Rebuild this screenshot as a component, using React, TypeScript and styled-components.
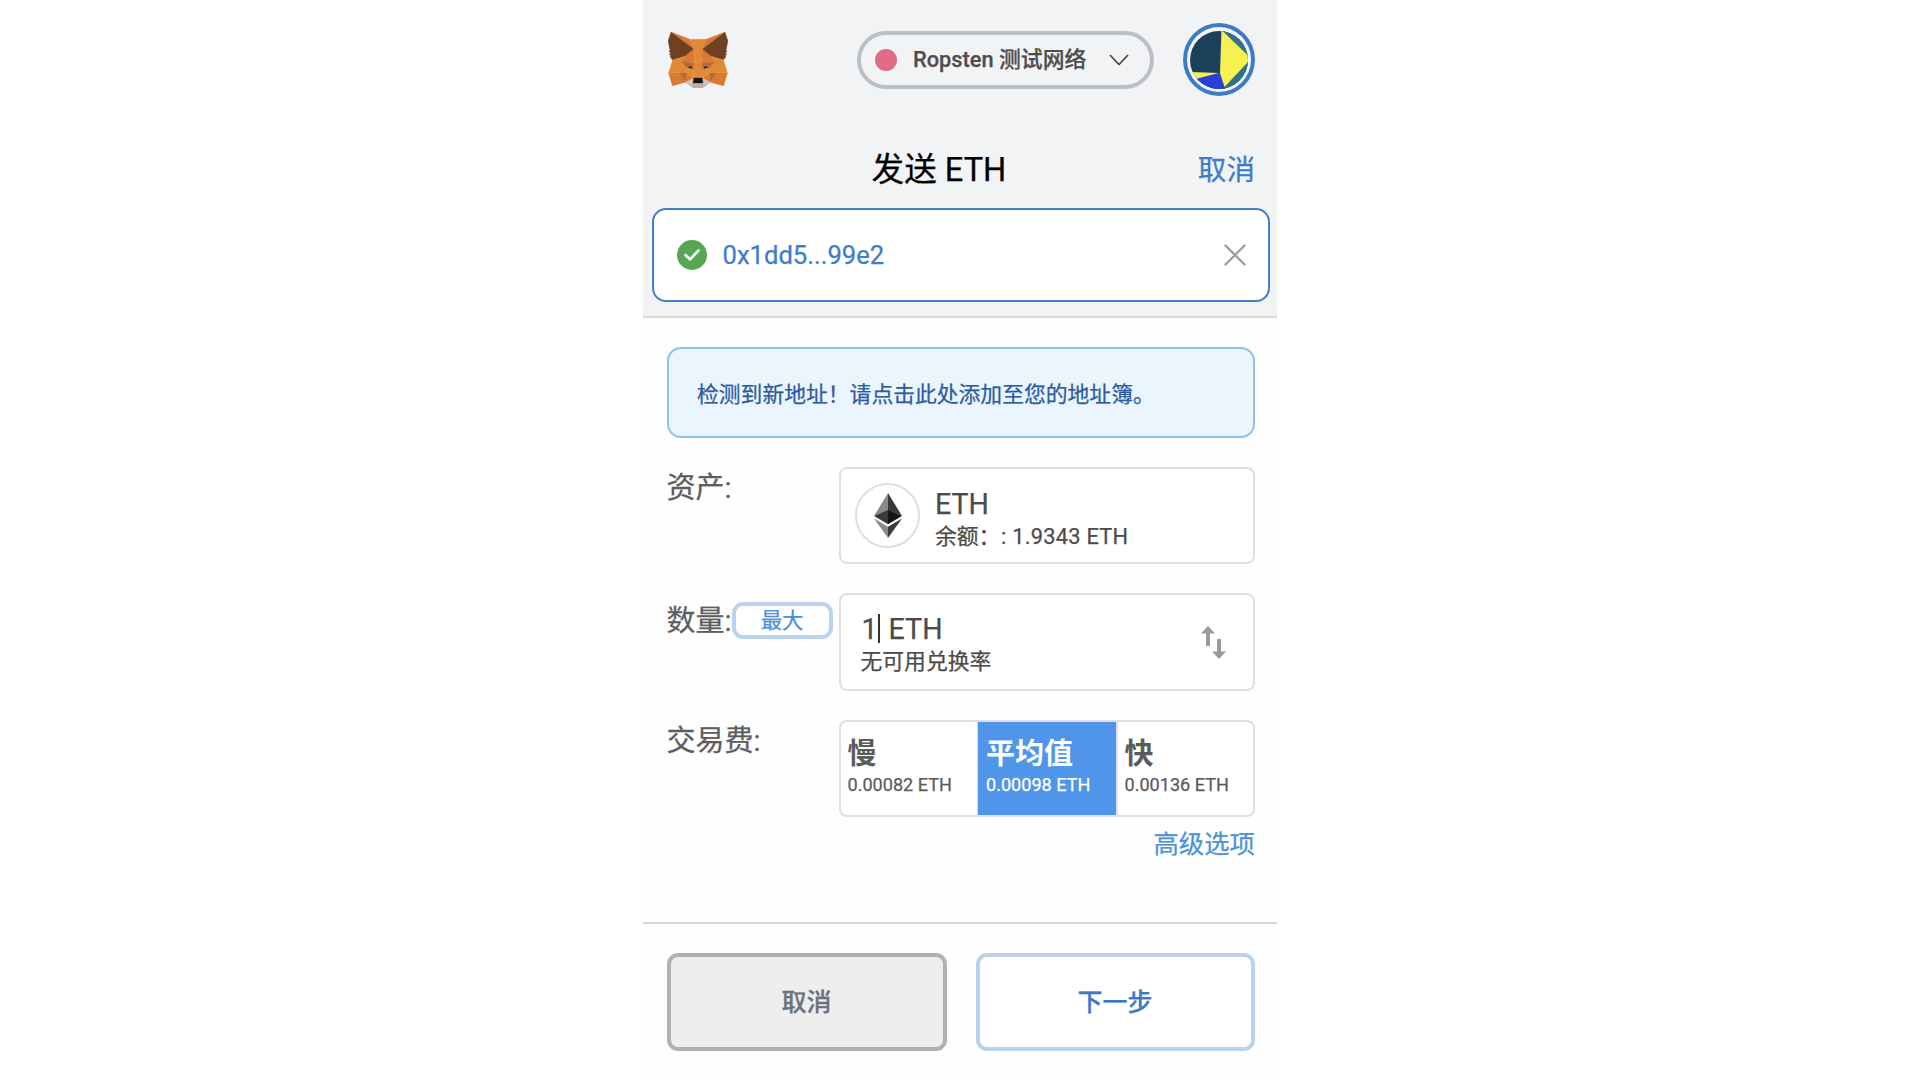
import React from 'react';
import styled, { createGlobalStyle } from 'styled-components';

const GlobalStyle = createGlobalStyle`
  * { box-sizing: border-box; }
  body {
    margin: 0;
    background: #fff;
    font-family: Roboto, "Noto Sans CJK SC", sans-serif;
    color: #4d4d4d;
    -webkit-text-stroke: 0.25px currentColor;
  }
  button { font-family: inherit; margin: 0; padding: 0; cursor: pointer; }
`;

const Popup = styled.main`
  width: 634px;
  height: 1080px;
  margin: 0 auto;
  display: flex;
  flex-direction: column;
  background: #fefefe;
`;

const Header = styled.header`
  height: 318px;
  flex: none;
  background: #f1f3f5;
  border-bottom: 2px solid #d9dadc;
  padding: 23px 7px 0 9px;
`;

const TopBar = styled.div`
  display: flex;
  align-items: center;
  height: 73px;
  padding: 0 15px 0 16px;
`;

const Fox = styled.svg`
  width: 60px;
  height: 56px;
  flex: none;
`;

const Network = styled.button`
  width: 297px;
  height: 58px;
  margin-left: auto;
  padding: 0 21px 0 14px;
  display: flex;
  align-items: center;
  border: 4px solid #bbbfc6;
  border-radius: 29px;
  background: #f2f3f5;
  color: #4d4d4f;
  font-size: 21.8px;
  font-weight: 500;
  line-height: 30px;
`;

const NetworkDot = styled.span`
  width: 22px;
  height: 22px;
  border-radius: 50%;
  background: #df6b85;
  margin-right: 16px;
`;

const Chevron = styled.svg`
  width: 20px;
  height: 12px;
  margin-left: auto;
`;

const Account = styled.button`
  width: 72px;
  height: 73px;
  margin-left: 29px;
  display: flex;
  align-items: center;
  justify-content: center;
  border: 4px solid #3d7bc9;
  border-radius: 50%;
  background: #f4f7fb;
`;

const TitleBar = styled.div`
  display: grid;
  grid-template-columns: 71px 1fr 100px;
  align-items: center;
  height: 112px;
  padding: 35px 15px 0 0;
`;

const Title = styled.h1`
  grid-column: 2;
  margin: 0;
  font-size: 32.6px;
  font-weight: 400;
  line-height: 40px;
  text-align: center;
  color: #000;
`;

const CancelLink = styled.a`
  font-size: 28.6px;
  line-height: 40px;
  text-align: right;
  color: #3c7bca;
`;

const Recipient = styled.div`
  display: flex;
  align-items: center;
  height: 94px;
  padding: 0 22px 0 23px;
  border: 2px solid #4380cb;
  border-radius: 14px;
  background: #fff;
`;

const Address = styled.span`
  flex: 1;
  margin-left: 15.5px;
  font-size: 25.6px;
  line-height: 32px;
  color: #3e7ccc;
`;

const Content = styled.section`
  flex: none;
  height: 606px;
  padding: 29px 22px 0 24px;
  border-bottom: 2px solid #d6d8da;
`;

const Notice = styled.div`
  height: 91px;
  display: flex;
  align-items: center;
  padding: 4px 28px 0;
  border: 2px solid #90c1ee;
  border-radius: 14px;
  background: #eaf5fe;
  color: #2d5c9e;
  font-size: 21.8px;
  line-height: 30px;
`;

const Row = styled.div`
  display: flex;
  height: 97.4px;
  margin-top: 29px;
`;

const LabelCell = styled.div`
  width: 172px;
  flex: none;
  display: flex;
  align-items: flex-start;
  color: #5d5d5d;
`;

const Label = styled.label<{ $top: number }>`
  font-size: 29px;
  line-height: 36px;
  margin-top: ${(p) => p.$top}px;
  margin-left: -0.5px;
  white-space: nowrap;
`;

const MaxButton = styled.button`
  width: 101px;
  height: 37px;
  margin: 9px 0 0;
  padding-top: 1px;
  border: 4px solid #bad4ef;
  border-radius: 11px;
  background: #fff;
  color: #4a91df;
  font-size: 21.4px;
  line-height: 28px;
`;

const Field = styled.div<{ $pad: string }>`
  flex: 1;
  display: flex;
  align-items: center;
  padding: ${(p) => p.$pad};
  border: 2px solid #dfdfdf;
  border-radius: 8px;
  background: #fff;
`;

const TokenBadge = styled.div`
  width: 65px;
  height: 65px;
  margin-right: 15px;
  display: flex;
  align-items: center;
  justify-content: center;
  border: 2px solid #dfdfdf;
  border-radius: 50%;
`;

const FieldText = styled.div<{ $drop: number }>`
  flex: 1;
  display: flex;
  flex-direction: column;
  padding-top: ${(p) => p.$drop}px;
`;

const Primary = styled.div`
  display: flex;
  align-items: center;
  font-size: 28.6px;
  line-height: 34px;
  color: #4b4b4b;
`;

const Secondary = styled.div`
  font-size: 21.8px;
  line-height: 32px;
  color: #4b4b4b;
  white-space: pre;
`;

const Balance = styled.span`
  margin-left: -5px;
  letter-spacing: 0.25px;
`;

const Caret = styled.span`
  width: 2px;
  height: 29px;
  background: #333;
  margin: 0 9px 0 0;
`;

const Digits = styled.span`
  margin-left: 1px;
`;

const FeeGroup = styled.div`
  flex: 1;
  display: grid;
  grid-template-columns: 136px 141px 1fr;
  border: 2px solid #dfdfdf;
  border-radius: 8px;
  background: #fff;
  overflow: hidden;
`;

const FeeOption = styled.button<{ $active?: boolean }>`
  display: flex;
  flex-direction: column;
  align-items: flex-start;
  padding: 14px 0 0 ${(p) => (p.$active ? 8 : 6.5)}px;
  border: 0;
  border-right: ${(p) => (p.$active ? '2px solid #dfe3e8' : '0')};
  border-left: ${(p) => (p.$active ? '1px solid #d5dce6' : '0')};
  background: ${(p) => (p.$active ? '#5095e9' : 'transparent')};
  color: ${(p) => (p.$active ? '#fff' : '#5b5b5b')};
`;

const FeeName = styled.span`
  font-size: 29px;
  font-weight: 700;
  line-height: 36px;
  -webkit-text-stroke: 0;
`;

const FeeValue = styled.span`
  font-size: 18.1px;
  line-height: 25px;
`;

const Advanced = styled.a`
  display: block;
  margin-top: 9px;
  text-align: right;
  font-size: 25.4px;
  line-height: 36px;
  color: #4b93d8;
`;

const Footer = styled.footer`
  display: grid;
  grid-template-columns: 280px 279px;
  justify-content: space-between;
  padding: 29px 22px 0 24px;
`;

const ActionButton = styled.button<{ $primary?: boolean }>`
  height: 98px;
  padding: 2px 1px 0 0;
  border: 4px solid ${(p) => (p.$primary ? '#b9d3ec' : '#b1b1b1')};
  border-radius: 11px;
  background: ${(p) => (p.$primary ? '#fff' : '#eeeeee')};
  color: ${(p) => (p.$primary ? '#3c78c6' : '#6b737d')};
  font-size: 25px;
  font-weight: 500;
  line-height: 36px;
`;

const foxFacets: [string, string][] = [
  ['#d87a35', '274.1 35.5 174.6 109.4 193 65.8'],
  ['#d87a35', '44.4 35.5 143.1 110.1 125.6 65.8'],
  ['#d87a35', '238.3 206.8 211.8 247.4 268.5 263 284.8 207.7'],
  ['#d87a35', '33.9 207.7 50.1 263 106.8 247.4 80.3 206.8'],
  ['#d87a35', '103.6 138.2 87.8 162.1 144.1 164.6 142.1 104.1'],
  ['#d87a35', '214.9 138.2 175.9 103.4 174.6 164.6 230.8 162.1'],
  ['#d87a35', '106.8 247.4 140.6 230.9 111.4 208.1'],
  ['#d87a35', '177.9 230.9 211.8 247.4 207.1 208.1'],
  ['#d3c2b6', '211.8 247.4 177.9 230.9 180.6 253 180.3 262.3'],
  ['#d3c2b6', '106.8 247.4 138.3 262.3 138.1 253 140.6 230.9'],
  ['#283445', '138.8 193.5 110.6 185.2 130.5 176.1'],
  ['#283445', '179.7 193.5 188 176.1 208 185.2'],
  ['#c0652c', '106.8 247.4 111.6 206.8 80.3 207.7'],
  ['#c0652c', '207 206.8 211.8 247.4 238.3 207.7'],
  ['#c0652c', '230.8 162.1 174.6 164.6 179.8 193.5 188.1 176.1 208.1 185.2'],
  ['#c0652c', '110.6 185.2 130.6 176.1 138.8 193.5 144.1 164.6 87.8 162.1'],
  ['#d87a35', '87.8 162.1 111.4 208.1 110.6 185.2'],
  ['#d87a35', '208.1 185.2 207.1 208.1 230.8 162.1'],
  ['#d87a35', '144.1 164.6 138.8 193.5 145.4 227.6 146.9 182.7'],
  ['#d87a35', '174.6 164.6 171.9 182.6 173.1 227.6 179.8 193.5'],
  ['#e38936', '179.8 193.5 173.1 227.6 177.9 230.9 207.1 208.1 208.1 185.2'],
  ['#e38936', '110.6 185.2 111.4 208.1 140.6 230.9 145.4 227.6 138.8 193.5'],
  ['#beaea1', '180.3 262.3 180.6 253 178.1 250.8 140.4 250.8 138.1 253 138.3 262.3 106.8 247.4 117.8 256.4 140.1 271.9 178.4 271.9 200.8 256.4 211.8 247.4'],
  ['#161616', '177.9 230.9 173.1 227.6 145.4 227.6 140.6 230.9 138.1 253 140.4 250.8 178.1 250.8 180.6 253'],
  ['#6f4021', '278.3 114.2 286.8 73.4 274.1 35.5 177.9 106.9 214.9 138.2 267.2 153.5 278.8 140 273.8 136.4 281.8 129.1 275.6 124.3 283.6 118.2'],
  ['#6f4021', '31.8 73.4 40.3 114.2 34.9 118.2 42.9 124.3 36.8 129.1 44.8 136.4 39.8 140 51.3 153.5 103.6 138.2 140.6 106.9 44.4 35.5'],
  ['#e38936', '267.2 153.5 214.9 138.2 230.8 162.1 207.1 208.1 238.3 207.7 284.8 207.7'],
  ['#e38936', '103.6 138.2 51.3 153.5 33.9 207.7 80.3 207.7 111.4 208.1 87.8 162.1'],
  ['#e38936', '174.6 164.6 177.9 106.9 193.1 65.8 125.6 65.8 140.6 106.9 144.1 164.6 145.3 182.8 145.4 227.6 173.1 227.6 173.3 182.8'],
];

const FoxLogo = () => (
  <Fox viewBox="31.8 35.5 255 236.4" preserveAspectRatio="none">
    {foxFacets.map(([fill, points], i) => (
      <polygon key={i} points={points} fill={fill} stroke={fill} strokeWidth="1" strokeLinejoin="round" />
    ))}
  </Fox>
);

const Identicon = () => (
  <svg width="58" height="58" viewBox="0 0 58 58">
    <defs>
      <clipPath id="disc"><circle cx="29" cy="29" r="29" /></clipPath>
    </defs>
    <g clipPath="url(#disc)">
      <rect width="58" height="58" fill="#1d405a" />
      <path d="M31 0H58V58H34Z" fill="#347083" />
      <path d="M0 41L30 42L0 50Z" fill="#f4f151" />
      <path d="M0 49.500L30.500 41.500L36 58H0Z" fill="#2a3fd6" />
      <path d="M31.500 -1L58 24.500V31L34.500 56L30 42Z" fill="#f4f151" />
    </g>
  </svg>
);

const EthLogo = () => (
  <svg width="28" height="45" viewBox="0 0 28 45">
    <path d="M14 0L0 23L14 17Z" fill="#8a8a8a" />
    <path d="M14 0L28 23L14 17Z" fill="#3a3a3a" />
    <path d="M14 16.700L0 23L14 31.200Z" fill="#393939" />
    <path d="M14 16.700L28 23L14 31.200Z" fill="#151515" />
    <path d="M0 25.500L14 33.800V45Z" fill="#8a8a8a" />
    <path d="M28 25.500L14 33.800V45Z" fill="#3c3c3b" />
  </svg>
);

const fees = [
  { name: '慢', value: '0.00082 ETH' },
  { name: '平均值', value: '0.00098 ETH', active: true },
  { name: '快', value: '0.00136 ETH' },
];

export default function App() {
  return (
    <>
      <GlobalStyle />
      <Popup>
        <Header>
          <TopBar>
            <FoxLogo />
            <Network>
              <NetworkDot />
              Ropsten 测试网络
              <Chevron viewBox="0 0 20 12">
                <path d="M1 1L10 10.500L19 1" fill="none" stroke="#4a4a4c" strokeWidth="1.800" />
              </Chevron>
            </Network>
            <Account><Identicon /></Account>
          </TopBar>
          <TitleBar>
            <Title>发送 ETH</Title>
            <CancelLink>取消</CancelLink>
          </TitleBar>
          <Recipient>
            <svg width="30" height="30" viewBox="0 0 30 30">
              <circle cx="15" cy="15" r="15" fill="#55a753" />
              <path d="M8.500 15L13 19.500L21.500 10.500" fill="none" stroke="#fff" strokeWidth="2.600" strokeLinecap="round" />
            </svg>
            <Address>0x1dd5...99e2</Address>
            <svg width="22" height="22" viewBox="0 0 22 22">
              <path d="M1.500 1.500L20.500 20.500M20.500 1.500L1.500 20.500" stroke="#9c9da7" strokeWidth="2.400" strokeLinecap="round" />
            </svg>
          </Recipient>
        </Header>
        <Content>
          <Notice>检测到新地址！请点击此处添加至您的地址簿。</Notice>
          <Row>
            <LabelCell><Label $top={3}>资产:</Label></LabelCell>
            <Field $pad="0 0 0 14px">
              <TokenBadge><EthLogo /></TokenBadge>
              <FieldText $drop={8}>
                <Primary>ETH</Primary>
                <Secondary>余额：<Balance>{' : 1.9343 ETH'}</Balance></Secondary>
              </FieldText>
            </Field>
          </Row>
          <Row>
            <LabelCell>
              <Label $top={10}>数量:</Label>
              <MaxButton>最大</MaxButton>
            </LabelCell>
            <Field $pad="0 27px 0 19.500px">
              <FieldText $drop={5}>
                <Primary><Digits>1</Digits><Caret />ETH</Primary>
                <Secondary>无可用兑换率</Secondary>
              </FieldText>
              <svg width="25" height="33" viewBox="0 0 25 33">
                <path d="M7 0L14 7.500H9V20H5V7.500H0ZM18 33L11 25.500H16V13H20V25.500H25Z" fill="#9a9a9a" />
              </svg>
            </Field>
          </Row>
          <Row>
            <LabelCell><Label $top={3}>交易费:</Label></LabelCell>
            <FeeGroup>
              {fees.map((fee) => (
                <FeeOption key={fee.name} $active={fee.active}>
                  <FeeName>{fee.name}</FeeName>
                  <FeeValue>{fee.value}</FeeValue>
                </FeeOption>
              ))}
            </FeeGroup>
          </Row>
          <Advanced>高级选项</Advanced>
        </Content>
        <Footer>
          <ActionButton>取消</ActionButton>
          <ActionButton $primary>下一步</ActionButton>
        </Footer>
      </Popup>
    </>
  );
}
